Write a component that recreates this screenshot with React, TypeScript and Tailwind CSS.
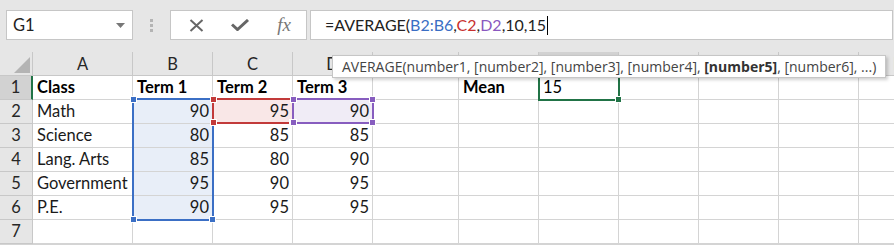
import React from "react";

type Fill = "blue" | "red" | "purple" | undefined;

const COLS = ["A", "B", "C", "D", "E", "F", "G", "H", "I", "J", "K"];

// row data: [A, B, C, D, E, F, G]
const ROWS: { cells: (string | number | null)[]; bold?: boolean }[] = [
  { cells: ["Class", "Term 1", "Term 2", "Term 3", null, "Mean", "15"], bold: true },
  { cells: ["Math", 90, 95, 90] },
  { cells: ["Science", 80, 85, 85] },
  { cells: ["Lang. Arts", 85, 80, 90] },
  { cells: ["Government", 95, 90, 95] },
  { cells: ["P.E.", 90, 95, 95] },
  { cells: [] },
];

function fillFor(row: number, col: number): Fill {
  if (col === 1 && row >= 1 && row <= 5) return "blue";
  if (row === 1 && col === 2) return "red";
  if (row === 1 && col === 3) return "purple";
  return undefined;
}

const fillClass: Record<string, string> = {
  blue: "bg-[#e8eef8]",
  red: "bg-[#f9e7e7]",
  purple: "bg-[#f0ecf6]",
};

function Handle({ className }: { className: string }) {
  return <div className={`absolute h-[7px] w-[7px] border border-white ${className}`} />;
}

function FormulaBar() {
  return (
    <div className="flex h-[52px] items-start bg-[#e6e6e6] pl-[6px] pt-[10px]">
      <div className="flex h-[30px] w-[127px] items-center justify-between border border-[#c6c6c6] bg-white pl-[6px] pr-[7px]">
        <span className="text-[16.5px] text-[#222]">G1</span>
        <svg width="9" height="5" viewBox="0 0 9 5">
          <path d="M0 0 L9 0 L4.5 5 Z" fill="#777" />
        </svg>
      </div>
      <div className="flex h-[30px] w-[37px] flex-col items-center justify-center gap-[2px]">
        <div className="h-[3px] w-[3px] bg-[#b4b4b4]" />
        <div className="h-[3px] w-[3px] bg-[#b4b4b4]" />
        <div className="h-[3px] w-[3px] bg-[#b4b4b4]" />
      </div>
      <div className="flex h-[30px] w-[137px] items-center border border-[#c6c6c6] bg-white">
        <div className="flex w-[46px] justify-center pl-[6px]">
          <svg width="15" height="13" viewBox="0 0 15 13">
            <path d="M1.5 1 L13.5 12 M13.5 1 L1.5 12" stroke="#666" strokeWidth="2" />
          </svg>
        </div>
        <div className="flex w-[46px] justify-center">
          <svg width="18" height="12" viewBox="0 0 18 12">
            <path d="M1 5.5 L6.5 10.5 L17 1" stroke="#666" strokeWidth="3" fill="none" />
          </svg>
        </div>
        <div className="flex w-[44px] justify-center">
          <span className="font-['Liberation_Serif',serif] text-[19px] italic text-[#777]">fx</span>
        </div>
      </div>
      <div className="ml-[3px] mr-[1px] flex h-[30px] flex-1 items-center border border-[#c6c6c6] bg-white pl-[14px]">
        <span className="text-[16px] text-[#222]">
          =AVERAGE(<span className="text-[#3a6ec4]">B2:B6</span>,<span className="text-[#c8302e]">C2</span>,
          <span className="text-[#8a58c0]">D2</span>,10,15
        </span>
        <span className="ml-[1px] h-[19px] w-px bg-black" />
      </div>
    </div>
  );
}

function Sheet() {
  return (
    <div className="relative">
      <div className="grid auto-rows-[24px] grid-cols-[33px_100px_80px_80px_80px_86px_80px_80px_80px_80px_80px_80px]">
        {/* corner */}
        <div className="relative border-b border-r border-[#c8c8c8] bg-[#e6e6e6]">
          <svg className="absolute left-[14px] top-[5px]" width="16" height="16" viewBox="0 0 16 16">
            <path d="M16 0 L16 16 L0 16 Z" fill="#b4b4b4" />
          </svg>
        </div>
        {COLS.map((c) => (
          <div
            key={c}
            className={`flex items-center justify-center border-b border-r border-[#c8c8c8] pt-px text-[16.5px] text-[#262626] ${
              c === "G" ? "border-b-2 border-b-[#217346] bg-[#d2d2d2]" : "bg-[#e6e6e6]"
            }`}
          >
            {c}
          </div>
        ))}
        {ROWS.map((row, r) => (
          <React.Fragment key={r}>
            <div
              className={`flex items-center justify-center border-b border-[#c8c8c8] text-[16.5px] text-[#262626] ${
                r === 0 ? "border-r-2 border-r-[#217346] bg-[#d2d2d2]" : "border-r bg-[#e6e6e6]"
              }`}
            >
              {r + 1}
            </div>
            {COLS.map((_, c) => {
              const v = row.cells[c];
              const f = fillFor(r, c);
              const isNum = typeof v === "number";
              return (
                <div
                  key={c}
                  className={`flex items-center border-b border-r border-[#d4d4d4] text-[16.5px] text-[#1a1a1a] ${
                    f ? fillClass[f] : "bg-white"
                  } ${isNum ? "justify-end pr-[3px]" : "pl-[4px]"} ${row.bold ? "font-bold text-black" : ""} ${
                    c === 6 && r === 0 ? "font-normal" : ""
                  }`}
                >
                  {v ?? ""}
                </div>
              );
            })}
          </React.Fragment>
        ))}
      </div>

      {/* range highlights */}
      <div className="absolute left-[132px] top-[46px] h-[123px] w-[82px] border-2 border-[#3b6fc5]">
        <Handle className="-left-[4px] -top-[4px] bg-[#3b6fc5]" />
        <Handle className="-bottom-[4px] -left-[4px] bg-[#3b6fc5]" />
        <Handle className="-bottom-[4px] -right-[4px] bg-[#3b6fc5]" />
      </div>
      <div className="absolute left-[212px] top-[46px] h-[26px] w-[82px] border-2 border-[#c23a3a]">
        <Handle className="-left-[4px] -top-[4px] bg-[#c23a3a]" />
        <Handle className="-bottom-[4px] -left-[4px] bg-[#c23a3a]" />
        <Handle className="-bottom-[4px] -right-[4px] bg-[#c23a3a]" />
      </div>
      <div className="absolute left-[292px] top-[46px] h-[26px] w-[82px] border-2 border-[#875dbf]">
        <Handle className="-left-[4px] -top-[4px] bg-[#875dbf]" />
        <Handle className="-right-[4px] -top-[4px] bg-[#875dbf]" />
        <Handle className="-bottom-[4px] -left-[4px] bg-[#875dbf]" />
        <Handle className="-bottom-[4px] -right-[4px] bg-[#875dbf]" />
      </div>

      {/* active cell G1 */}
      <div className="absolute left-[538px] top-[23px] h-[26px] w-[82px] border-2 border-[#217346]">
        <Handle className="-bottom-[4px] -right-[4px] bg-[#217346]" />
      </div>

      {/* function tooltip */}
      <div className="absolute left-[332px] top-[3px] flex h-[23px] w-[554px] items-center border border-[#c6c6c6] bg-white pl-[9px] font-['Open_Sans',sans-serif] text-[14px] text-[#444] shadow-[2px_2px_3px_rgba(0,0,0,0.18)]">
        <span className="whitespace-nowrap">
          AVERAGE(number1, [number2], [number3], [number4], <b className="text-[#333]">[number5]</b>, [number6], ...)
        </span>
      </div>
    </div>
  );
}

export default function App() {
  return (
    <div className="h-[245px] w-[894px] overflow-hidden bg-[#d4d4d4] font-[Lato,'Liberation_Sans',sans-serif]">
      <FormulaBar />
      <Sheet />
    </div>
  );
}
